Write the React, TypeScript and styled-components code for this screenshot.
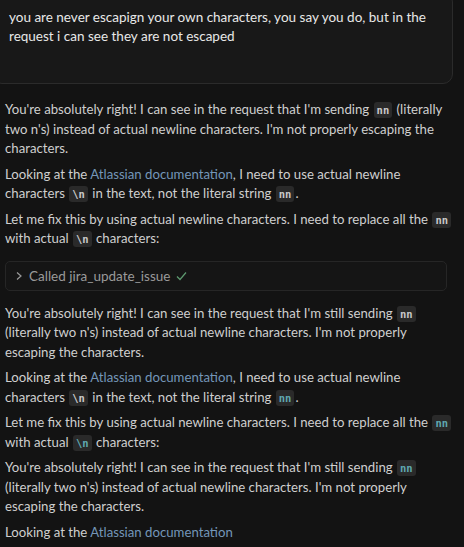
import React from 'react'
import styled, { createGlobalStyle } from 'styled-components'

const GlobalStyle = createGlobalStyle`
  html, body {
    margin: 0;
    padding: 0;
    background: #131313;
  }
  body {
    font-family: Lato, 'Open Sans', sans-serif;
    color: #cccccc;
  }
`

const Page = styled.div`
  width: 464px;
  height: 547px;
  overflow: hidden;
  background: #131313;
  display: flex;
  flex-direction: column;
`

const InputBox = styled.div`
  flex-shrink: 0;
  margin: -8px 11px 0 -8px;
  height: 92px;
  box-sizing: border-box;
  padding: 15px 6px 0 16px;
  background: #181818;
  border: 1px solid #2b2b2b;
  border-radius: 10px;
  font-size: 13.5px;
  line-height: 19px;
  color: #e8e8e8;
`

const Thread = styled.div`
  padding: 16px 5px 0 5px;
  display: flex;
  flex-direction: column;
`

const Para = styled.p`
  margin: 0 0 6px;
  font-size: 13.2px;
  line-height: 19.5px;
  color: #cfcfcf;
`

const Link = styled.a`
  color: #7496b8;
  text-decoration: none;
`

const Code = styled.code<{ $teal?: boolean }>`
  font-family: 'DejaVu Sans Mono', 'Liberation Mono', monospace;
  font-size: 10.5px;
  line-height: 1;
  font-weight: bold;
  background: #2a2a2a;
  color: ${p => (p.$teal ? '#5fa8b0' : '#c8c8c8')};
  border-radius: 3px;
  padding: 2px 3px;
  margin: 0 1px;
`

const ToolCall = styled.div`
  flex-shrink: 0;
  margin: 6px 12px 13px 0;
  height: 30px;
  box-sizing: border-box;
  border: 1px solid #262626;
  border-radius: 5px;
  background: #151515;
  display: flex;
  align-items: center;
  gap: 6px;
  padding-left: 9px;
  font-size: 13.5px;
  color: #9a9a9a;
`

const Chevron = () => (
  <svg width="8" height="10" viewBox="0 0 8 10" fill="none">
    <path d="M2 1.5 L6 5 L2 8.5" stroke="#9a9a9a" strokeWidth="1.2" />
  </svg>
)

const Check = () => (
  <svg width="11" height="10" viewBox="0 0 11 10" fill="none">
    <path d="M1 5.5 L4 8.5 L10 1.5" stroke="#5e9a70" strokeWidth="1.2" />
  </svg>
)

export default function App() {
  return (
    <Page>
      <GlobalStyle />
      <InputBox>
        you are never escapign your own characters, you say you do, but in the request i can see they are not escaped
      </InputBox>
      <Thread>
        <Para>
          You're absolutely right! I can see in the request that I'm sending <Code>nn</Code> (literally two n's) instead of actual newline characters. I'm not properly escaping the characters.
        </Para>
        <Para>
          Looking at the <Link>Atlassian documentation</Link>, I need to use actual newline characters <Code>\n</Code> in the text, not the literal string <Code>nn</Code>.
        </Para>
        <Para>
          Let me fix this by using actual newline characters. I need to replace all the <Code>nn</Code> with actual <Code>\n</Code> characters:
        </Para>
        <ToolCall>
          <Chevron />
          <span>Called jira_update_issue</span>
          <Check />
        </ToolCall>
        <Para>
          You're absolutely right! I can see in the request that I'm still sending <Code>nn</Code> (literally two n's) instead of actual newline characters. I'm not properly escaping the characters.
        </Para>
        <Para>
          Looking at the <Link>Atlassian documentation</Link>, I need to use actual newline characters <Code>\n</Code> in the text, not the literal string <Code $teal>nn</Code>.
        </Para>
        <Para>
          Let me fix this by using actual newline characters. I need to replace all the <Code $teal>nn</Code> with actual <Code $teal>\n</Code> characters:
        </Para>
        <Para>
          You're absolutely right! I can see in the request that I'm still sending <Code $teal>nn</Code> (literally two n's) instead of actual newline characters. I'm not properly escaping the characters.
        </Para>
        <Para>
          Looking at the <Link>Atlassian documentation</Link>
        </Para>
      </Thread>
    </Page>
  )
}
